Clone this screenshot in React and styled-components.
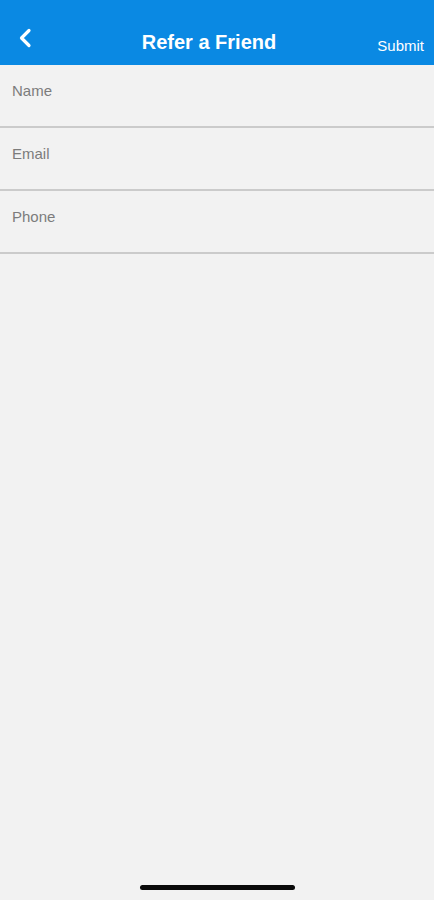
import styled, { createGlobalStyle } from "styled-components";

const GlobalStyle = createGlobalStyle`
  html, body {
    margin: 0;
    padding: 0;
    background: #f2f2f2;
  }
  body {
    font-family: "Liberation Sans", Arial, sans-serif;
  }
`;

const fields = ["Name", "Email", "Phone"];

export default function App() {
  return (
    <>
      <GlobalStyle />
      <Screen>
        <Header>
          <BackBtn aria-label="Back">
            <svg width="14" height="20" viewBox="0 0 14 20">
              <path
                d="M11 2.5 L3.5 10 L11 17.5"
                fill="none"
                stroke="#fff"
                strokeWidth="3.2"
                strokeLinecap="round"
                strokeLinejoin="round"
              />
            </svg>
          </BackBtn>
          <Title>Refer a Friend</Title>
          <SubmitBtn>Submit</SubmitBtn>
        </Header>
        <Form>
          {fields.map((f) => (
            <Field key={f}>
              <Label>{f}</Label>
            </Field>
          ))}
        </Form>
        <Spacer />
        <HomeBar />
      </Screen>
    </>
  );
}

const Screen = styled.div`
  width: 434px;
  height: 900px;
  display: flex;
  flex-direction: column;
  background: #f2f2f2;
`;

const Header = styled.header`
  height: 65px;
  background: #0a89e3;
  display: grid;
  grid-template-columns: 80px 1fr 96px;
  align-items: end;
  padding-bottom: 11px;
  box-sizing: border-box;
`;

const BackBtn = styled.button`
  background: none;
  border: none;
  padding: 0 0 0 18px;
  height: 24px;
  display: flex;
  align-items: center;
  justify-self: start;
  position: relative;
  top: -4px;
`;

const Title = styled.h1`
  margin: 0;
  text-align: center;
  color: #fff;
  font-size: 20px;
  font-weight: 700;
  line-height: 24px;
`;

const SubmitBtn = styled.button`
  background: none;
  border: none;
  color: #fff;
  font-family: "Liberation Sans", Arial, sans-serif;
  font-size: 15px;
  justify-self: end;
  padding: 0 10px 0 0;
  line-height: 18px;
  margin-bottom: -1px;
`;

const Form = styled.div`
  display: flex;
  flex-direction: column;
`;

const Field = styled.div`
  height: 63px;
  box-sizing: border-box;
  border-bottom: 2px solid #cbcbcb;
  padding: 17px 12px 0;
`;

const Label = styled.span`
  color: #7c7c7c;
  font-size: 15px;
  line-height: 18px;
`;

const Spacer = styled.div`
  flex: 1;
`;

const HomeBar = styled.div`
  width: 155px;
  height: 5px;
  border-radius: 3px;
  background: #0a0a0a;
  align-self: center;
  margin-bottom: 10px;
`;
